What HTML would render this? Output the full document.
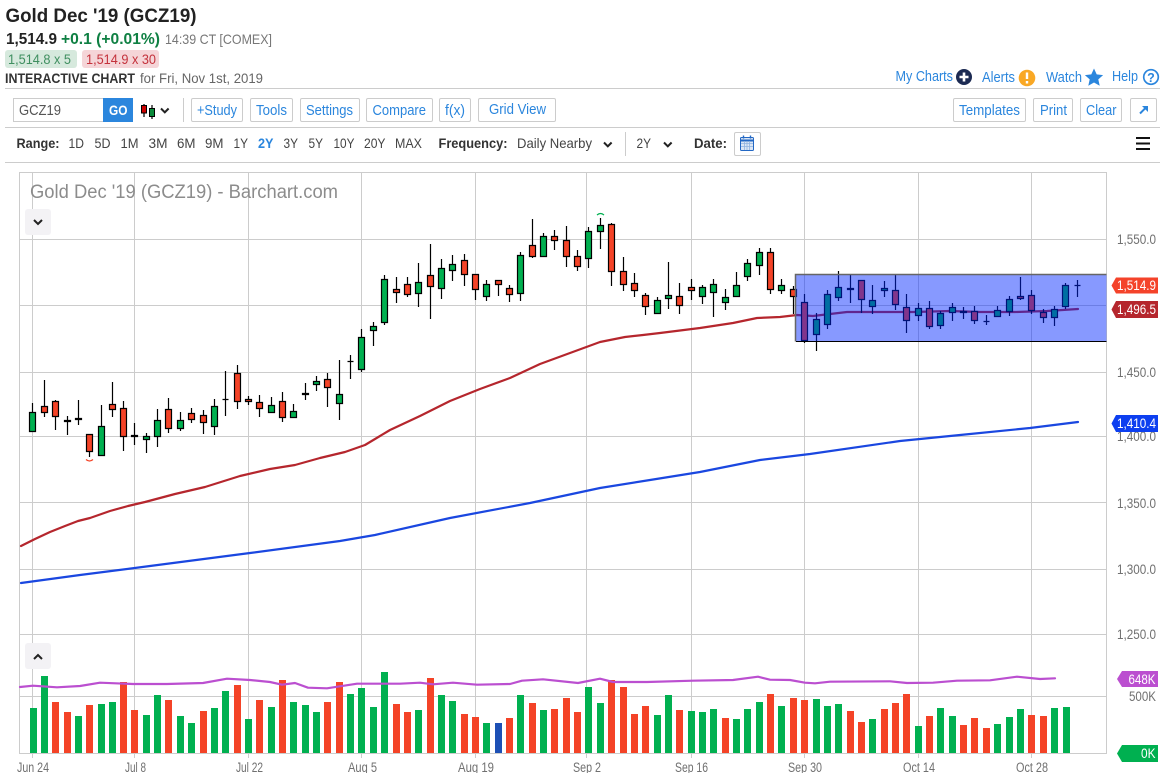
<!DOCTYPE html>
<html lang="en">
<head>
<meta charset="utf-8">
<title>Gold Dec '19 (GCZ19)</title>
<style>
html,body{margin:0;padding:0;background:#fff;width:1169px;height:773px;overflow:hidden}
svg{display:block}
text{font-family:"Liberation Sans",Arial,sans-serif}
.b{fill:#2b86dd;font-size:14.5px}
.k{fill:#444;font-size:14px}
.kb{fill:#333;font-size:14px;font-weight:bold}
.y{fill:#707070;font-size:13.5px}
.x{fill:#707070;font-size:13.5px}
.t{fill:#fff;font-size:13.5px}
.btn{fill:#fff;stroke:#ccc;stroke-width:1}
.ma{fill:none;stroke-width:2.2;stroke-linejoin:round;stroke-linecap:round}
</style>
</head>
<body>
<svg xmlns="http://www.w3.org/2000/svg" width="1169" height="773" viewBox="0 0 1169 773">
<rect width="1169" height="773" fill="#fff"/>

<!-- header -->
<text x="5.5" y="22" font-size="19.500" font-weight="bold" fill="#222" textLength="191" lengthAdjust="spacingAndGlyphs">Gold Dec '19 (GCZ19)</text>
<text x="6" y="44" font-size="15.500" font-weight="bold" fill="#222" textLength="51" lengthAdjust="spacingAndGlyphs">1,514.9</text>
<text x="61" y="44" font-size="15.500" font-weight="bold" fill="#0f8043" textLength="99" lengthAdjust="spacingAndGlyphs">+0.1 (+0.01%)</text>
<text x="165" y="44" font-size="14" fill="#777" textLength="107" lengthAdjust="spacingAndGlyphs">14:39 CT [COMEX]</text>
<rect x="5" y="50" width="72" height="18" rx="3" fill="#d6e9dd"/>
<text x="8" y="64" font-size="14" fill="#3f8f60" textLength="63" lengthAdjust="spacingAndGlyphs">1,514.8 x 5</text>
<rect x="82" y="50" width="77" height="18" rx="3" fill="#f5d5d8"/>
<text x="86" y="64" font-size="14" fill="#c4323c" textLength="70" lengthAdjust="spacingAndGlyphs">1,514.9 x 30</text>
<text x="5" y="83" font-size="13.500" font-weight="bold" fill="#333" textLength="130" lengthAdjust="spacingAndGlyphs">INTERACTIVE CHART</text>
<text x="140" y="83" font-size="14" fill="#666" textLength="123" lengthAdjust="spacingAndGlyphs">for Fri, Nov 1st, 2019</text>

<text class="b" x="895.5" y="81" textLength="57.5" lengthAdjust="spacingAndGlyphs">My Charts</text>
<circle cx="964" cy="77" r="8" fill="#1c2a52"/>
<path d="M964 72.5v9M959.5 77h9" stroke="#fff" stroke-width="2.6" fill="none"/>
<text class="b" x="982" y="82" textLength="33" lengthAdjust="spacingAndGlyphs">Alerts</text>
<circle cx="1027" cy="78" r="8.3" fill="#f9a825"/>
<path d="M1027 72.5v6.5M1027 81v2.5" stroke="#fff" stroke-width="2.4" fill="none"/>
<text class="b" x="1046" y="82" textLength="36" lengthAdjust="spacingAndGlyphs">Watch</text>
<path d="M1094 68.5l2.7 5.900 6.400.7-4.800 4.300 1.400 6.300-5.700-3.200-5.700 3.200 1.400-6.300-4.800-4.300 6.400-.7z" fill="#2b86dd"/>
<text class="b" x="1112" y="81" textLength="26" lengthAdjust="spacingAndGlyphs">Help</text>
<circle cx="1151" cy="77" r="7.3" fill="none" stroke="#2b86dd" stroke-width="1.7"/>
<text x="1151" y="82" font-size="12.5" font-weight="bold" fill="#2b86dd" text-anchor="middle">?</text>

<path d="M5 88.5H1160M5 127.5H1160M5 162.5H1160" stroke="#ccc" stroke-width="1" fill="none"/>

<!-- toolbar -->
<rect x="13.5" y="98.5" width="90" height="23" fill="#fff" stroke="#ccc"/>
<text x="19" y="115" font-size="14.500" fill="#555" textLength="42" lengthAdjust="spacingAndGlyphs">GCZ19</text>
<rect x="103" y="98" width="30" height="24" fill="#2b86dd"/>
<text x="109" y="115" font-size="14" font-weight="bold" fill="#fff" textLength="18.5" lengthAdjust="spacingAndGlyphs">GO</text>
<path d="M144 104v13M152 105v14" stroke="#000" stroke-width="1.2"/>
<rect x="141.5" y="105.5" width="5" height="7.5" fill="#c00" stroke="#000"/>
<rect x="149.5" y="108.5" width="5" height="8" fill="#0a8a3a" stroke="#000"/>
<path d="M161 108.5l3.8 3.8 3.8-3.8" fill="none" stroke="#222" stroke-width="2"/>
<path d="M183.5 98v24M625.5 132v24" stroke="#ccc"/>

<rect class="btn" x="191.5" y="98.5" width="51" height="23" rx="1.5"/>
<text class="b" x="197" y="115" textLength="40" lengthAdjust="spacingAndGlyphs">+Study</text>
<rect class="btn" x="250.5" y="98.5" width="42" height="23" rx="1.5"/>
<text class="b" x="256" y="115" textLength="31" lengthAdjust="spacingAndGlyphs">Tools</text>
<rect class="btn" x="300.5" y="98.5" width="59" height="23" rx="1.5"/>
<text class="b" x="306" y="115" textLength="47" lengthAdjust="spacingAndGlyphs">Settings</text>
<rect class="btn" x="366.5" y="98.5" width="66" height="23" rx="1.5"/>
<text class="b" x="372.5" y="115" textLength="53.5" lengthAdjust="spacingAndGlyphs">Compare</text>
<rect class="btn" x="439.5" y="98.5" width="31" height="23" rx="1.5"/>
<text class="b" x="445" y="115" textLength="20" lengthAdjust="spacingAndGlyphs">f(x)</text>
<rect class="btn" x="478.5" y="98.5" width="77" height="23" rx="1.5"/>
<text class="b" x="489" y="114" textLength="57" lengthAdjust="spacingAndGlyphs">Grid View</text>

<rect class="btn" x="953.5" y="98.5" width="72" height="23" rx="1.5"/>
<text class="b" x="959" y="115" textLength="61" lengthAdjust="spacingAndGlyphs">Templates</text>
<rect class="btn" x="1033.5" y="98.5" width="39" height="23" rx="1.5"/>
<text class="b" x="1040" y="115" textLength="27" lengthAdjust="spacingAndGlyphs">Print</text>
<rect class="btn" x="1080.5" y="98.5" width="41" height="23" rx="1.5"/>
<text class="b" x="1086" y="115" textLength="30.5" lengthAdjust="spacingAndGlyphs">Clear</text>
<rect class="btn" x="1130.5" y="98.5" width="26" height="23" rx="1.5"/>
<path d="M1140 113.5l6-6" stroke="#2b86dd" stroke-width="2" fill="none"/>
<path d="M1142 106h6v6z" fill="#2b86dd"/>

<!-- range row -->
<text class="kb" x="16.5" y="148" textLength="43" lengthAdjust="spacingAndGlyphs">Range:</text>
<text class="k" x="68.5" y="148" textLength="15.5" lengthAdjust="spacingAndGlyphs">1D</text>
<text class="k" x="94.5" y="148" textLength="16" lengthAdjust="spacingAndGlyphs">5D</text>
<text class="k" x="120.5" y="148" textLength="18" lengthAdjust="spacingAndGlyphs">1M</text>
<text class="k" x="148.5" y="148" textLength="19" lengthAdjust="spacingAndGlyphs">3M</text>
<text class="k" x="177" y="148" textLength="18.5" lengthAdjust="spacingAndGlyphs">6M</text>
<text class="k" x="205" y="148" textLength="18.5" lengthAdjust="spacingAndGlyphs">9M</text>
<text class="k" x="233.5" y="148" textLength="14.5" lengthAdjust="spacingAndGlyphs">1Y</text>
<text x="258" y="148" font-size="14" font-weight="bold" fill="#2b86dd" textLength="15.5" lengthAdjust="spacingAndGlyphs">2Y</text>
<text class="k" x="283.5" y="148" textLength="14.5" lengthAdjust="spacingAndGlyphs">3Y</text>
<text class="k" x="308.5" y="148" textLength="14.5" lengthAdjust="spacingAndGlyphs">5Y</text>
<text class="k" x="333.5" y="148" textLength="21" lengthAdjust="spacingAndGlyphs">10Y</text>
<text class="k" x="364" y="148" textLength="21.5" lengthAdjust="spacingAndGlyphs">20Y</text>
<text class="k" x="395" y="148" textLength="27" lengthAdjust="spacingAndGlyphs">MAX</text>
<text class="kb" x="438.5" y="148" textLength="69" lengthAdjust="spacingAndGlyphs">Frequency:</text>
<text class="k" x="517" y="148" textLength="75" lengthAdjust="spacingAndGlyphs">Daily Nearby</text>
<path d="M604 142.5l3.8 3.8 3.8-3.8M664 142.5l3.8 3.8 3.8-3.8" fill="none" stroke="#222" stroke-width="2"/>
<text class="k" x="636.5" y="148" textLength="14.5" lengthAdjust="spacingAndGlyphs">2Y</text>
<text class="kb" x="694" y="148" textLength="33" lengthAdjust="spacingAndGlyphs">Date:</text>
<rect class="btn" x="734.5" y="132.5" width="26" height="23" rx="1.5"/>
<rect x="740.5" y="137.5" width="13" height="13" rx="1" fill="#dbe6f5" stroke="#2368c4"/>
<path d="M740.5 140.5h13" stroke="#2368c4" stroke-width="2"/>
<path d="M744.5 141v9M747 141v9M749.5 141v9M741 143.5h12M741 146.5h12" stroke="#8fb3e0" stroke-width=".8"/>
<path d="M743.5 135.5v3M750.5 135.5v3" stroke="#2368c4" stroke-width="1.4"/>
<path d="M1136 138h14M1136 143.5h14M1136 149h14" stroke="#111" stroke-width="2"/>

<!-- grid -->
<path d="M19.5 172.5H1106.5V753.5H19.5ZM19.5 634.5H1106.5M19.5 239.5H1106.5M19.5 305.5H1106.5M19.5 372.5H1106.5M19.5 436.5H1106.5M19.5 502.5H1106.5M19.5 569.5H1106.5M19.5 696.5H1106.5" fill="none" stroke="#ccc"/>
<path d="M32.5 172V758M134.5 172V758M248.5 172V758M361.5 172V758M475.5 172V758M586.5 172V758M691.5 172V758M804.5 172V758M918.5 172V758M1031.5 172V758" fill="none" stroke="#ccc"/>

<text x="30" y="198" font-size="19" fill="#8c8c8c" textLength="308" lengthAdjust="spacingAndGlyphs">Gold Dec '19 (GCZ19) - Barchart.com</text>
<rect x="25" y="209" width="26" height="26" rx="3" fill="#f3f2f5"/>
<path d="M34 220l4 4 4-4" fill="none" stroke="#222" stroke-width="2"/>
<rect x="25" y="643" width="26" height="26" rx="3" fill="#f3f2f5"/>
<path d="M34 659l4-4 4 4" fill="none" stroke="#222" stroke-width="2"/>

<!-- moving averages -->
<path class="ma" stroke="#b5262d" d="M21 546L35 539L50 532L65 526L78 521L90 518L110 511L128 506L145 502L175 494L205 487L240 476L270 469L295 465L320 458L345 452L365 445L390 430L420 416L450 401L480 389L510 378L540 364L570 353L600 342L625 337L643 335L660 333L700 328L733 323L757 318L780 317L797 315L813 316L847 312L880 312L913 312L950 311L980 312L1015 312L1047 311L1078 309"/>
<path class="ma" stroke="#1a47e0" d="M21 583L80 575L150 566L250 553L340 541L375 535L450 518L530 503L600 488L650 480L700 472L760 460L810 454L900 441L960 435L1030 428L1078 422"/>

<!-- wicks -->
<path fill="none" stroke="#000" stroke-width="1.2" d="M32.5 403V431M44.5 380V417M55.5 400V430M67.5 416V435M78.5 400V425M89.5 434V457M101.5 405V455M112.5 382V417M123.5 401V451M134.5 423V445M146.5 433V453M157.5 409V447M168.5 398V433M180.5 412V431M191.5 408V423M203.5 410V434M214.5 399V435M225.5 371V416M237.5 365V409M248.5 396V405M259.5 395V417M271.5 397V413M282.5 392V422M293.5 404V418M305.5 383V400M316.5 376V391M327.5 373V407M339.5 360V420M350.5 355V379M361.5 329V372M373.5 322V346M384.5 275V325M396.5 277V303M407.5 277V297M418.5 263V307M430.5 244V319M441.5 259V299M452.5 255V281M464.5 254V286M475.5 274V300M486.5 280V301M498.5 280V296M509.5 285V302M520.5 252V301M532.5 219V258M543.5 233V257M554.5 230V250M566.5 226V267M577.5 250V271M588.5 227V268M600.5 218V249M611.5 223V286M623.5 257V291M634.5 273V297M645.5 293V315M657.5 297V313M668.5 262V309M679.5 283V314M691.5 279V300M702.5 285V304M713.5 279V317M725.5 289V310M736.5 272V297M747.5 259V281M759.5 248V275M770.5 248V294M781.5 279V294M793.5 286V314M804.5 294V343M816.5 313V351M827.5 290V329M838.5 271V301M850.5 275V303M861.5 280V313M872.5 285V314M884.5 281V297M895.5 275V310M906.5 294V333M918.5 303V321M929.5 301V329M940.5 311V329M952.5 303V321M963.5 307V319M974.5 306V324M986.5 315V325M997.5 306V317M1009.5 296V316M1020.5 277V300M1031.5 290V314M1043.5 309V323M1054.5 306V326M1065.5 283V309M1077.5 280V297"/>
<!-- dojis -->
<path fill="none" stroke="#000" stroke-width="1.2" d="M64.5 420.5h6v1h-6zM75.5 418.5h6v1h-6zM131.5 435.5h6v1h-6zM302.5 393.5h6v1h-6zM847.5 288.5h6v1h-6zM960.5 311.5h6v1h-6zM222.5 399.5h6M347.5 361.5h6M983.5 321.5h6M1074.5 285.5h6"/>
<!-- green bodies -->
<path fill="#00b050" stroke="#000" stroke-width="1.2" d="M29.5 412.5h6v19h-6zM98.5 426.5h6v29h-6zM143.5 436.5h6v3h-6zM154.5 420.5h6v16h-6zM177.5 420.5h6v8h-6zM211.5 406.5h6v20h-6zM268.5 405.5h6v7h-6zM290.5 411.5h6v6h-6zM313.5 381.5h6v3h-6zM336.5 394.5h6v9h-6zM358.5 337.5h6v32h-6zM370.5 326.5h6v4h-6zM381.5 279.5h6v43h-6zM415.5 282.5h6v11h-6zM438.5 268.5h6v20h-6zM449.5 264.5h6v6h-6zM483.5 284.5h6v12h-6zM517.5 255.5h6v38h-6zM540.5 236.5h6v20h-6zM585.5 231.5h6v27h-6zM597.5 225.5h6v6h-6zM654.5 300.5h6v13h-6zM665.5 295.5h6v3h-6zM699.5 287.5h6v9h-6zM710.5 284.5h6v8h-6zM722.5 297.5h6v5h-6zM733.5 285.5h6v11h-6zM744.5 263.5h6v13h-6zM756.5 252.5h6v13h-6zM778.5 285.5h6v5h-6zM813.5 319.5h6v15h-6zM824.5 294.5h6v30h-6zM835.5 287.5h6v10h-6zM869.5 300.5h6v6h-6zM881.5 288.5h6v2h-6zM915.5 308.5h6v7h-6zM937.5 313.5h6v12h-6zM949.5 307.5h6v5h-6zM994.5 310.5h6v6h-6zM1006.5 299.5h6v12h-6zM1051.5 309.5h6v8h-6zM1062.5 285.5h6v21h-6z"/>
<!-- red bodies -->
<path fill="#f44327" stroke="#000" stroke-width="1.2" d="M41.5 406.5h6v6h-6zM52.5 401.5h6v15h-6zM86.5 434.5h6v17h-6zM109.5 404.5h6v5h-6zM120.5 408.5h6v28h-6zM165.5 409.5h6v19h-6zM188.5 413.5h6v6h-6zM200.5 415.5h6v7h-6zM234.5 373.5h6v28h-6zM245.5 399.5h6v2h-6zM256.5 402.5h6v6h-6zM279.5 401.5h6v16h-6zM324.5 379.5h6v8h-6zM393.5 289.5h6v3h-6zM404.5 284.5h6v10h-6zM427.5 275.5h6v11h-6zM461.5 260.5h6v14h-6zM472.5 274.5h6v15h-6zM495.5 280.5h6v4h-6zM506.5 288.5h6v6h-6zM529.5 245.5h6v11h-6zM551.5 236.5h6v4h-6zM563.5 240.5h6v16h-6zM574.5 256.5h6v10h-6zM608.5 224.5h6v47h-6zM620.5 271.5h6v13h-6zM631.5 283.5h6v7h-6zM642.5 295.5h6v11h-6zM676.5 296.5h6v9h-6zM688.5 287.5h6v3h-6zM767.5 252.5h6v37h-6zM790.5 289.5h6v7h-6zM801.5 302.5h6v38h-6zM858.5 280.5h6v19h-6zM892.5 290.5h6v14h-6zM903.5 307.5h6v13h-6zM926.5 308.5h6v18h-6zM971.5 311.5h6v9h-6zM1017.5 296.5h6v2h-6zM1028.5 295.5h6v15h-6zM1040.5 312.5h6v5h-6z"/>
<!-- high/low markers -->
<path d="M597 215q3.5-3 7 0" fill="none" stroke="#00b050" stroke-width="1.2"/>
<path d="M86 459.5q3.5 3 7 0" fill="none" stroke="#f44327" stroke-width="1.2"/>

<!-- rectangle overlay -->
<rect x="796" y="275" width="310.5" height="66" fill="rgb(0,38,255)" fill-opacity=".47"/>
<path d="M795.5 341.5V274.5H1106.5" fill="none" stroke="#666" stroke-width="1.5"/>
<path d="M796 341.5H1106.5" fill="none" stroke="#000" stroke-width="1"/>

<!-- volume bars -->
<path fill="none" stroke="#00b050" stroke-width="7" d="M33.5 708V753M44.5 676V753M78.5 716V753M101.5 704V753M112.5 702V753M146.5 715V753M157.5 695V753M180.5 716V753M191.5 723V753M214.5 708V753M225.5 691V753M248.5 719V753M271.5 707V753M293.5 702V753M305.5 705V753M316.5 712V753M350.5 694V753M361.5 688V753M373.5 707V753M384.5 672V753M418.5 710V753M441.5 695V753M452.5 701V753M486.5 723V753M520.5 695V753M543.5 710V753M588.5 687V753M600.5 703V753M657.5 715V753M668.5 695V753M691.5 711V753M702.5 712V753M713.5 709V753M736.5 719V753M747.5 709V753M759.5 702V753M781.5 706V753M816.5 699V753M827.5 706V753M838.5 704V753M872.5 719V753M918.5 726V753M940.5 708V753M952.5 716V753M997.5 724V753M1009.5 717V753M1020.5 709V753M1054.5 708V753M1066.5 707V753"/>
<path fill="none" stroke="#f44327" stroke-width="7" d="M55.5 702V753M67.5 712V753M89.5 705V753M123.5 682V753M134.5 710V753M168.5 700V753M203.5 711V753M237.5 685V753M259.5 700V753M282.5 680V753M327.5 702V753M339.5 682V753M396.5 704V753M407.5 712V753M430.5 678V753M464.5 714V753M475.5 717V753M509.5 718V753M532.5 703V753M554.5 709V753M566.5 698V753M577.5 712V753M611.5 680V753M623.5 687V753M634.5 714V753M645.5 706V753M679.5 710V753M725.5 718V753M770.5 694V753M793.5 698V753M804.5 700V753M850.5 711V753M861.5 722V753M884.5 709V753M895.5 703V753M906.5 694V753M929.5 716V753M963.5 725V753M974.5 718V753M986.5 728V753M1031.5 715V753M1043.5 716V753"/>
<path fill="none" stroke="#1d50b5" stroke-width="7" d="M498.5 723V753"/>
<path class="ma" stroke="#bb4fd0" d="M20 687L33 685.7L57 687.3L80 686L100 682.7L133 684L167 684L203 683L227 678.7L250 680L270 682L282 684.7L295 683L308 687.7L327 688.3L357 683.7L400 683.7L420 682.7L433 684.3L453 682.7L477 684.7L510 684L522 680.7L543 679.3L578 683L600 678.7L613 682L647 682L693 680.7L733 680L758 676.7L770 679.7L790 680L805 682.7L815 683.3L830 681.7L890 681.3L907 683L933 682.7L957 680.7L990 680.3L1017 676.7L1040 679L1055 678.3"/>

<!-- y axis labels -->
<text class="y" x="1117" y="244" textLength="39" lengthAdjust="spacingAndGlyphs">1,550.0</text>
<text class="y" x="1117" y="377" textLength="39" lengthAdjust="spacingAndGlyphs">1,450.0</text>
<text class="y" x="1117" y="441" textLength="39" lengthAdjust="spacingAndGlyphs">1,400.0</text>
<text class="y" x="1117" y="508" textLength="39" lengthAdjust="spacingAndGlyphs">1,350.0</text>
<text class="y" x="1117" y="574" textLength="39" lengthAdjust="spacingAndGlyphs">1,300.0</text>
<text class="y" x="1117" y="639" textLength="39" lengthAdjust="spacingAndGlyphs">1,250.0</text>
<text class="y" x="1129" y="701" textLength="27" lengthAdjust="spacingAndGlyphs">500K</text>

<path d="M1111.5 285.5L1116 277.5H1158V293.5H1116Z" fill="#f4432a"/>
<text class="t" x="1117" y="290" textLength="39" lengthAdjust="spacingAndGlyphs">1,514.9</text>
<path d="M1111.5 309.5L1116 301H1158V318H1116Z" fill="#b5262d"/>
<text class="t" x="1117" y="314" textLength="39" lengthAdjust="spacingAndGlyphs">1,496.5</text>
<path d="M1111.5 423.5L1116 415H1158V432H1116Z" fill="#0d3ff0"/>
<text class="t" x="1117" y="428" textLength="39" lengthAdjust="spacingAndGlyphs">1,410.4</text>
<path d="M1117 679L1122 671H1158V687H1122Z" fill="#bb4fd0"/>
<text class="t" x="1128.5" y="684" textLength="27" lengthAdjust="spacingAndGlyphs">648K</text>
<path d="M1117 753.5L1122 745H1158V762H1122Z" fill="#00b050"/>
<text class="t" x="1141" y="758" textLength="14.5" lengthAdjust="spacingAndGlyphs">0K</text>

<!-- x axis labels -->
<text class="x" x="17" y="772" textLength="32" lengthAdjust="spacingAndGlyphs">Jun 24</text>
<text class="x" x="125" y="772" textLength="21" lengthAdjust="spacingAndGlyphs">Jul 8</text>
<text class="x" x="236" y="772" textLength="27" lengthAdjust="spacingAndGlyphs">Jul 22</text>
<text class="x" x="348" y="772" textLength="29" lengthAdjust="spacingAndGlyphs">Aug 5</text>
<text class="x" x="458" y="772" textLength="36" lengthAdjust="spacingAndGlyphs">Aug 19</text>
<text class="x" x="573" y="772" textLength="28" lengthAdjust="spacingAndGlyphs">Sep 2</text>
<text class="x" x="675" y="772" textLength="33" lengthAdjust="spacingAndGlyphs">Sep 16</text>
<text class="x" x="788" y="772" textLength="34" lengthAdjust="spacingAndGlyphs">Sep 30</text>
<text class="x" x="903" y="772" textLength="32" lengthAdjust="spacingAndGlyphs">Oct 14</text>
<text class="x" x="1016" y="772" textLength="32" lengthAdjust="spacingAndGlyphs">Oct 28</text>
</svg>
</body>
</html>
